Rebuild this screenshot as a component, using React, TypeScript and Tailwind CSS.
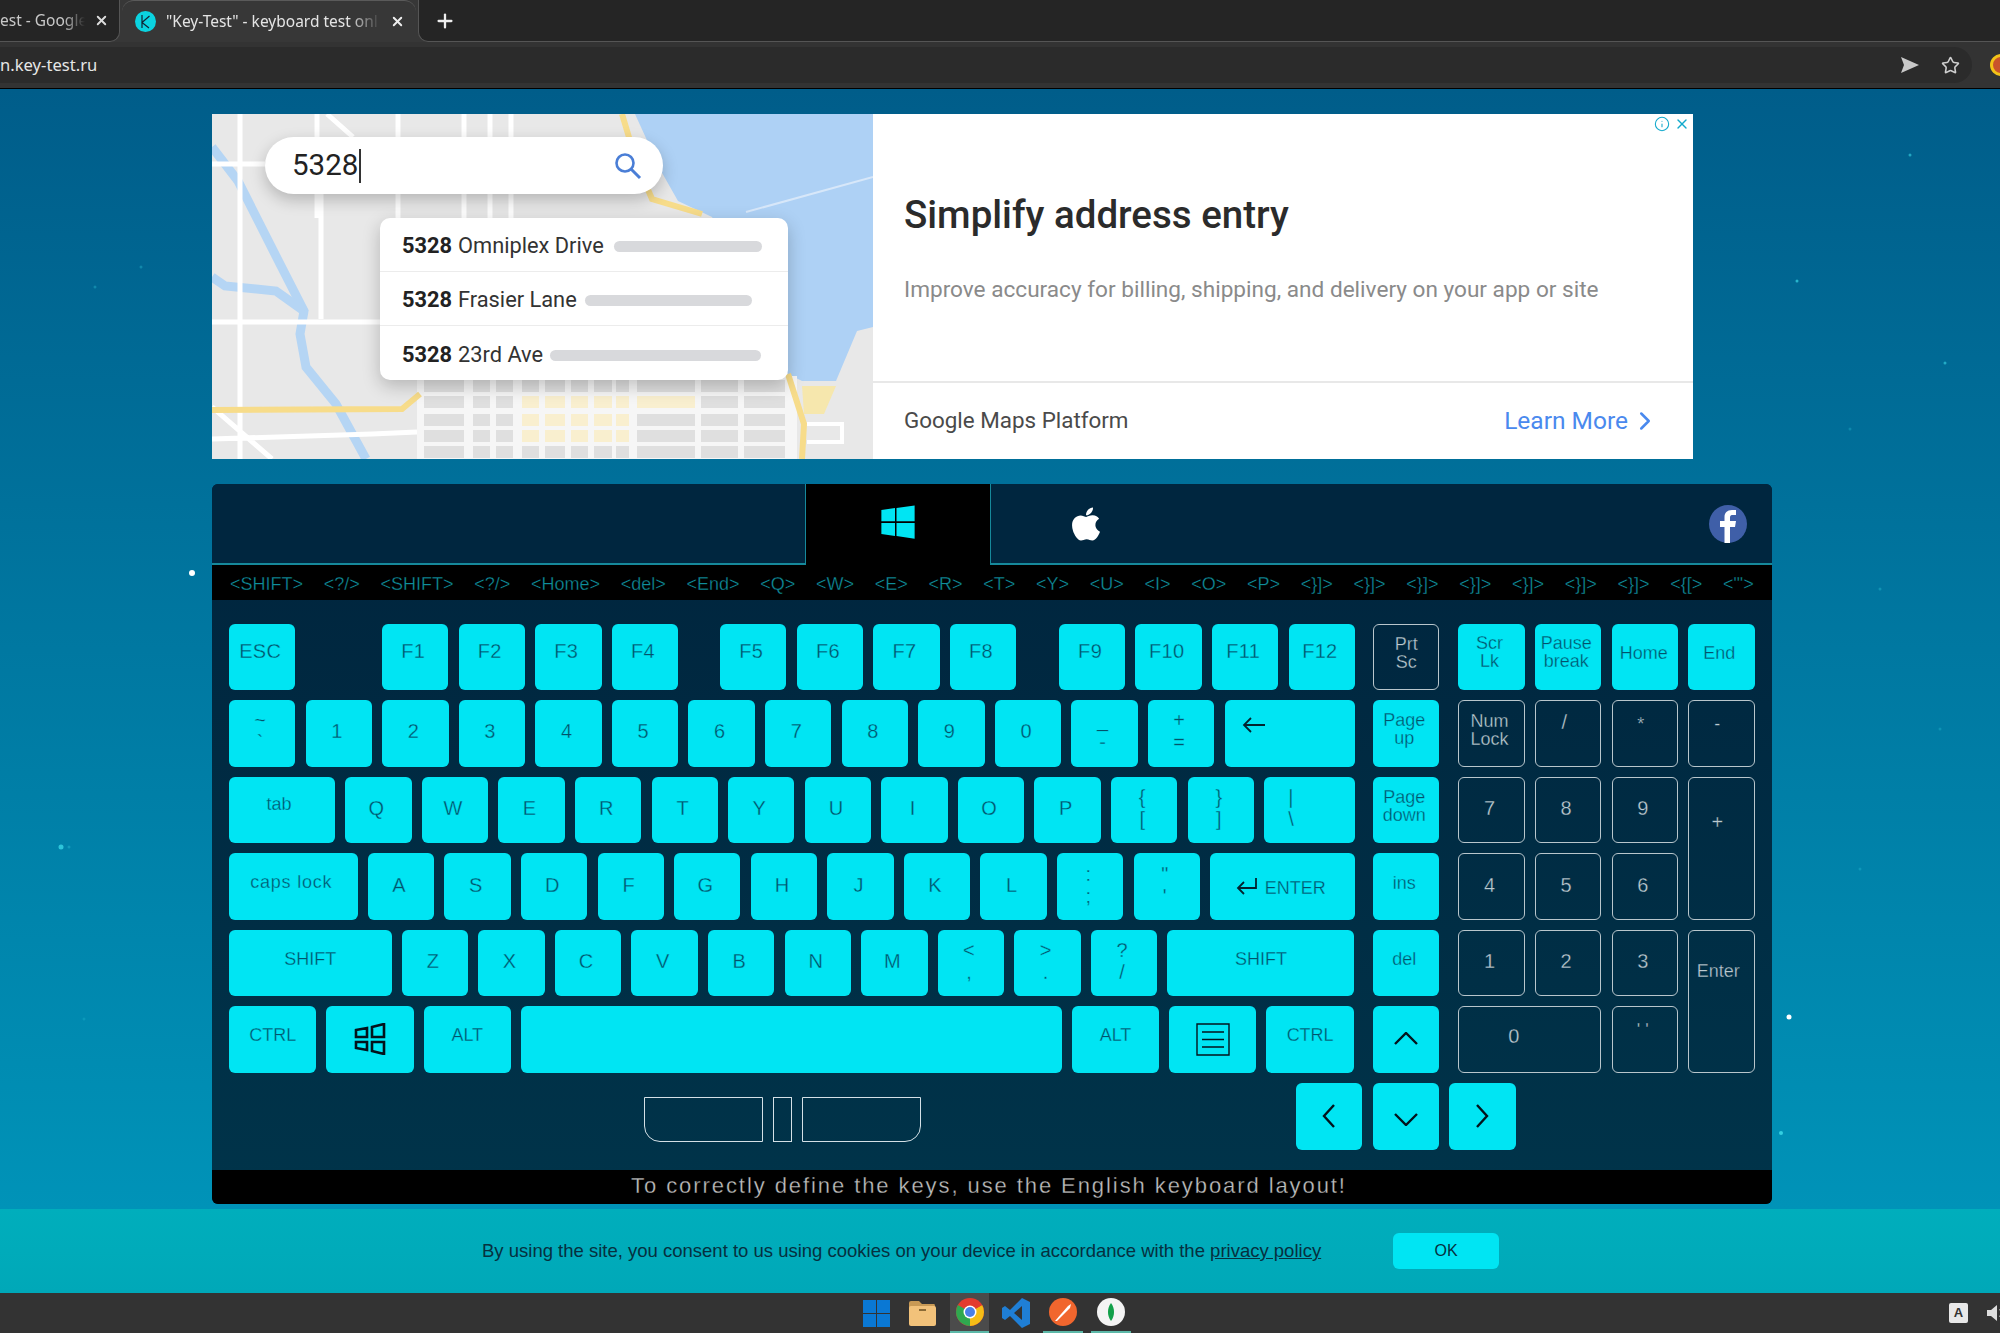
import type { ReactNode } from "react";
import clsx from "clsx";
import { FaApple, FaWindows } from "react-icons/fa";
import { ChevronRight, Info, Plus, Star, X } from "lucide-react";

// keyboard pieces
const Key = ({
  w = "w-[66.4px]",
  h = "h-[66.6px]",
  className,
  children,
}: {
  w?: string;
  h?: string;
  className?: string;
  children?: ReactNode;
}) => (
  <div
    className={clsx(
      "flex shrink-0 items-center justify-center rounded-md bg-[#00e5f3] text-[#02526b] [-webkit-text-stroke:0.3px_#00e5f3]",
      w,
      h,
      className,
    )}
  >
    {children}
  </div>
);

const PadKey = ({
  w = "w-[66.4px]",
  h = "h-[66.6px]",
  className,
  children,
}: {
  w?: string;
  h?: string;
  className?: string;
  children?: ReactNode;
}) => (
  <div
    className={clsx(
      "flex shrink-0 rounded-md border-[1.5px] border-[#b9c6cc] text-[#bccad1] [-webkit-text-stroke:0.3px_#002b42]",
      w,
      h,
      className,
    )}
  >
    {children}
  </div>
);

const Two = ({ a, b, className }: { a: string; b: string; className?: string }) => (
  <div className={clsx("flex flex-col items-center text-[20px] leading-[22px]", className)}>
    <span>{a}</span>
    <span>{b}</span>
  </div>
);

const Char = ({ c }: { c: string }) => (
  <Key className="pr-1 pb-1 text-[20px]">{c}</Key>
);

const Fn = ({ c, className }: { c: string; className?: string }) => (
  <Key className={clsx("pr-1 pb-3 text-[20px] tracking-[0.3px]", className)}>{c}</Key>
);

const Chevron = ({ d, w, h }: { d: string; w: number; h: number }) => (
  <svg width={w} height={h} viewBox={`0 0 ${w} ${h}`} fill="none" stroke="#03131c" strokeWidth="2.4">
    <path d={d} />
  </svg>
);

const legend = [
  "<SHIFT>", "<?/>", "<SHIFT>", "<?/>", "<Home>", "<del>", "<End>", "<Q>", "<W>", "<E>", "<R>", "<T>",
  "<Y>", "<U>", "<I>", "<O>", "<P>", "<}]>", "<}]>", "<}]>", "<}]>", "<}]>", "<}]>", "<}]>", "<{[>", "<\"'>",
];

const specks = [
  [192, 484, 3, "#ffffff", 1],
  [61, 758, 2.5, "#38d6e6", 0.8],
  [1789, 928, 2.5, "#ffffff", 1],
  [1781, 1044, 2, "#38d6e6", 0.9],
  [1910, 66, 1.5, "#38d6e6", 0.6],
  [1797, 192, 1.5, "#38d6e6", 0.7],
  [1945, 274, 1.5, "#38d6e6", 0.6],
  [95, 198, 1.5, "#38d6e6", 0.3],
  [141, 178, 1.5, "#38d6e6", 0.3],
  [69, 758, 1.5, "#38d6e6", 0.3],
  [84, 930, 1.5, "#38d6e6", 0.2],
  [1880, 500, 1.5, "#38d6e6", 0.3],
  [1860, 780, 1.5, "#38d6e6", 0.25],
  [1940, 640, 1.5, "#38d6e6", 0.25],
  [1850, 340, 1.5, "#38d6e6", 0.25],
] as const;

// the ad's map picture
const blockCols = [
  [212, 40],
  [261, 17],
  [284, 17],
  [310, 17],
  [333, 20],
  [359, 17],
  [382, 18],
  [404, 13],
  [425, 58],
  [489, 37],
  [532, 41],
];
const blockRows = [266, 282, 300, 316, 332];

const AdMap = () => (
  <svg width="661" height="345" viewBox="0 0 661 345" className="block">
    <rect width="661" height="345" fill="#e8e8e8" />
    <path d="M423 0 L449 57 L466 87 L500 103 L576 260 L590 267 L624 267 L645 217 L661 213 L661 0 Z" fill="#aed1f5" />
    <path d="M534 98 L661 63" stroke="#d7e7f9" strokeWidth="2" />
    <path d="M0 33 L26 67 L68 150 L92 197 L88 220 L94 253 L124 290 L154 345" stroke="#b5d5f4" strokeWidth="9" fill="none" />
    <path d="M0 163 L13 172 L64 177 L92 197" stroke="#b5d5f4" strokeWidth="9" fill="none" />
    {[105, 186, 252, 278, 299].map((x) => (
      <path key={x} d={`M${x} 0 V104`} stroke="#fff" strokeWidth="5" />
    ))}
    <path d="M28 0 V345 M109 80 V205 M0 208 H168 M0 50 H53 M115 0 L141 23 M0 293 L60 345 M0 325 L160 320 L205 318" stroke="#fff" strokeWidth="5" fill="none" />
    <rect x="205" y="262" width="380" height="83" fill="#f6f6f6" />
    {blockCols.map(([x, w], i) =>
      blockRows.map((y, j) => (
        <rect
          key={`${i}-${j}`}
          x={x}
          y={y}
          width={w}
          height={12}
          fill={i >= 3 && i <= 7 && j >= 1 && j <= 3 ? "#f9efcf" : i === 8 && j === 1 ? "#f9efcf" : "#dfdfdf"}
        />
      )),
    )}
    <path d="M0 296 L190 295 L208 280" stroke="#f7dc8a" strokeWidth="6" fill="none" />
    <path d="M410 0 L425 50 L440 85 L490 100" stroke="#f7dc8a" strokeWidth="6" fill="none" />
    <path d="M576 260 L592 310 L590 345" stroke="#f7dc8a" strokeWidth="6" fill="none" />
    <path d="M590 272 L624 272 L612 300 L592 300 Z" fill="#f6e7ad" />
    <path d="M595 310 H630 V328 H595" stroke="#fff" strokeWidth="4" fill="none" />
  </svg>
);

const Row = ({ children }: { children: ReactNode }) => <div className="flex gap-[10.2px]">{children}</div>;

export default function App() {
  return (
    <div className="flex h-[1333px] w-[2000px] flex-col overflow-hidden bg-[#333] font-['Liberation_Sans',Arial,sans-serif]">
      {/* browser chrome */}
      <div className="h-[42px] shrink-0 bg-[#373737] font-['Noto_Sans',sans-serif] text-[15.5px]">
        <div className="flex h-full items-stretch">
          <div className="flex w-[120px] items-center rounded-br-[10px] border-r border-b border-[#555] bg-[#252525]">
            <span className="w-[85px] whitespace-nowrap text-[#c9c9c9] [mask-image:linear-gradient(to_right,black_75%,transparent)]">
              est - Google
            </span>
            <X size={15} strokeWidth={3} className="ml-[9px] text-[#ddd]" />
          </div>
          <div className="ml-[2px] flex w-[294px] items-center rounded-t-xl border-t border-[#5a5a5a] pl-[13px] text-[#e4e4e4]">
            <svg width="21" height="21" viewBox="0 0 21 21" className="shrink-0">
              <circle cx="10.5" cy="10.5" r="10.5" fill="#0bd3e0" />
              <path d="M7 4 V17 M14.5 5 L7 11.5 L14 17" stroke="#123" strokeWidth="1.2" fill="none" />
            </svg>
            <span className="ml-[10px] w-[215px] whitespace-nowrap [mask-image:linear-gradient(to_right,black_85%,transparent)]">
              "Key-Test" - keyboard test onl
            </span>
            <X size={15} strokeWidth={3} className="ml-[9px] text-[#eee]" />
          </div>
          <div className="ml-[2px] flex flex-1 items-center rounded-bl-[10px] border-b border-l border-[#555] bg-[#252525] pl-[15px]">
            <Plus size={22} strokeWidth={2.5} className="text-[#eee]" />
          </div>
        </div>
      </div>
      <div className="flex h-[47px] shrink-0 items-center border-b border-black bg-[#333]">
        <div className="flex h-[36px] w-[1972px] shrink-0 items-center rounded-r-full bg-[#2b2b2b]">
          <span className="font-['Noto_Sans',sans-serif] text-[16.6px] text-[#e6e6e6]">n.key-test.ru</span>
          <svg width="20" height="16" viewBox="0 0 20 16" className="ml-auto" fill="#c9c9c9">
            <path d="M1 0 L19 8 L1 16 L4 8 Z" />
          </svg>
          <Star size={19} strokeWidth={2} className="mr-[12px] ml-[21px] text-[#cfcfcf]" />
        </div>
        <div className="ml-[18px] h-[22px] w-[22px] shrink-0 rounded-full border-[3px] border-[#f3c318] bg-[#c9532b]" />
      </div>

      {/* page */}
      <div className="relative flex-1 bg-[linear-gradient(180deg,#005d8a,#0093b8)] pt-[25px] pl-[212px]">
        <svg className="pointer-events-none absolute inset-0" width="2000" height="1120">
          {specks.map(([x, y, r, c, o], i) => (
            <circle key={i} cx={x} cy={y} r={r} fill={c} opacity={o} />
          ))}
        </svg>

        {/* ad */}
        <div className="relative flex h-[345px] w-[1481px] bg-white font-['Roboto',sans-serif]">
          <div className="relative h-[345px] w-[661px] shrink-0 overflow-hidden">
            <AdMap />
            <div className="absolute top-[23px] left-[53px] flex h-[57px] w-[398px] items-center rounded-full bg-white pr-[20px] pl-[27px] text-[29.5px] text-[#222] shadow-[0_6px_16px_rgba(0,0,0,0.22)]">
              <span>5328</span>
              <span className="ml-[1px] h-[34px] w-[1.5px] bg-[#333]" />
              <svg width="30" height="30" viewBox="0 0 30 30" fill="none" className="ml-auto">
                <circle cx="12" cy="12" r="8.5" stroke="#4a7ed6" strokeWidth="2.6" />
                <path d="M18 18 L27 27" stroke="#4a7ed6" strokeWidth="3" />
              </svg>
            </div>
            <div className="absolute top-[104px] left-[168px] flex w-[408px] flex-col divide-y divide-[#ececec] rounded-[10px] bg-white text-[21.8px] text-[#333] shadow-[0_6px_18px_rgba(0,0,0,0.22)]">
              <div className="flex h-[54px] items-center pt-[4px] pl-[22px]">
                <b className="mr-[6px] font-bold text-[#222]">5328</b>
                <span>Omniplex Drive</span>
                <span className="ml-[10px] h-[11px] w-[148px] rounded-full bg-[#d8d9dc]" />
              </div>
              <div className="flex h-[54px] items-center pt-[4px] pl-[22px]">
                <b className="mr-[6px] font-bold text-[#222]">5328</b>
                <span>Frasier Lane</span>
                <span className="ml-[8px] h-[11px] w-[167px] rounded-full bg-[#d8d9dc]" />
              </div>
              <div className="flex h-[54px] items-center pt-[4px] pl-[22px]">
                <b className="mr-[6px] font-bold text-[#222]">5328</b>
                <span>23rd Ave</span>
                <span className="ml-[7px] h-[11px] w-[211px] rounded-full bg-[#d8d9dc]" />
              </div>
            </div>
          </div>
          <div className="flex flex-1 flex-col">
            <div className="flex h-[267px] flex-col pl-[31px]">
              <h2 className="mt-[77px] text-[38.5px] leading-[48px] font-medium text-[#2b2b2b]">Simplify address entry</h2>
              <p className="mt-[36px] text-[22.6px] leading-[30px] text-[#8a8a8a]">
                Improve accuracy for billing, shipping, and delivery on your app or site
              </p>
            </div>
            <div className="flex flex-1 items-center border-t-2 border-[#e8e8e8] pr-[33px] pl-[31px]">
              <span className="text-[22.4px] text-[#4a4a4a]">Google Maps Platform</span>
              <span className="ml-auto text-[24.5px] text-[#4a89ee]">Learn More</span>
              <ChevronRight size={30} strokeWidth={2} className="ml-[2px] text-[#4a89ee]" />
            </div>
          </div>
          <div className="absolute top-[2px] right-[3px] flex items-center gap-[4px] text-[#12a9cc]">
            <Info size={16} strokeWidth={1.6} />
            <X size={16} strokeWidth={2} />
          </div>
        </div>

        {/* keyboard */}
        <div className="relative mt-[25px] w-[1560px] overflow-hidden rounded-md bg-[linear-gradient(180deg,#00243d,#00344a)]">
          <div className="flex h-[81px] bg-[#00263f]">
            <div className="w-[593px] border-b-2 border-[#16899b]" />
            <div className="flex w-[186px] items-center justify-center border-x border-[#16899b] bg-black pb-[6px]">
              <FaWindows size={38} className="text-[#00e5f3]" />
            </div>
            <div className="flex flex-1 items-center border-b-2 border-[#16899b] pr-[25px] pl-[76px]">
              <FaApple size={38} className="text-white" />
              <svg width="38" height="38" viewBox="0 0 38 38" className="ml-auto">
                <circle cx="19" cy="19" r="19" fill="#3f5fa8" />
                <path d="M21 38 V22 H26 L27 16 H21 V12.5 C21 10.5 22 10 24 10 H27 V5 H23 C18 5 15.5 8 15.5 12 V16 H11 V22 H15.5 V38 Z" fill="#fff" />
              </svg>
            </div>
          </div>
          <div className="flex h-[35px] items-center justify-between bg-black px-[18px] pt-[4px] text-[18px] text-[#0f8e9c] [-webkit-text-stroke:0.3px_#000]">
            {legend.map((l, i) => (
              <span key={i}>{l}</span>
            ))}
          </div>

          <div className="flex flex-col gap-[10px] pt-[23.5px] pr-[18px] pb-[20.5px] pl-[17px]">
            <div className="flex gap-[19px]">
              <div className="flex w-[1125px] flex-col gap-[10px]">
                <Row>
                  <Fn c="ESC" />
                  <Fn c="F1" className="ml-[76.4px]" />
                  <Fn c="F2" />
                  <Fn c="F3" />
                  <Fn c="F4" />
                  <Fn c="F5" className="ml-[31.8px]" />
                  <Fn c="F6" />
                  <Fn c="F7" />
                  <Fn c="F8" />
                  <Fn c="F9" className="ml-[32.5px]" />
                  <Fn c="F10" />
                  <Fn c="F11" />
                  <Fn c="F12" />
                </Row>
                <Row>
                  <Key className="pr-1 pb-1">
                    <Two a="~" b="`" />
                  </Key>
                  {"1234567890".split("").map((c) => (
                    <Char key={c} c={c} />
                  ))}
                  <Key className="pr-1 pb-1">
                    <Two a="_" b="-" />
                  </Key>
                  <Key className="pr-1 pb-1">
                    <Two a="+" b="=" />
                  </Key>
                  <Key w="w-[130px]" className="justify-start pb-[16px] pl-[17px]">
                    <svg width="23" height="16" viewBox="0 0 23 16" fill="none" stroke="#03232f" strokeWidth="1.8">
                      <path d="M23 8 H2 M9 1 L2 8 L9 15" />
                    </svg>
                  </Key>
                </Row>
                <Row>
                  <Key w="w-[106px]" className="pr-[6px] pb-[10px] text-[18px]">tab</Key>
                  {"QWERTYUIOP".split("").map((c) => (
                    <Char key={c} c={c} />
                  ))}
                  <Key className="pr-1 pb-1">
                    <Two a="{" b="[" />
                  </Key>
                  <Key className="pr-1 pb-1">
                    <Two a="}" b="]" />
                  </Key>
                  <Key w="w-[91px]" className="justify-start pb-1 pl-[24px]">
                    <Two a="|" b="\" />
                  </Key>
                </Row>
                <Row>
                  <Key w="w-[128.6px]" className="pr-1 pb-[8px] text-[18px] tracking-[0.8px]">caps lock</Key>
                  {"ASDFGHJKL".split("").map((c) => (
                    <Char key={c} c={c} />
                  ))}
                  <Key className="pr-1 pb-1">
                    <Two a=":" b=";" />
                  </Key>
                  <Key className="pr-1 pb-1">
                    <Two a={'"'} b="'" />
                  </Key>
                  <Key w="w-[145px]" className="gap-[7px] pr-[4px] text-[18px]">
                    <svg width="22" height="17" viewBox="0 0 22 17" fill="none" stroke="#03232f" strokeWidth="1.8">
                      <path d="M20 0 V10 H2 M8 4 L2 10 L8 16" />
                    </svg>
                    <span className="mt-[4px]">ENTER</span>
                  </Key>
                </Row>
                <Row>
                  <Key w="w-[162.5px]" className="pb-[8px] text-[18px]">SHIFT</Key>
                  {"ZXCVBNM".split("").map((c) => (
                    <Char key={c} c={c} />
                  ))}
                  <Key className="pr-1 pb-1">
                    <Two a="<" b="," />
                  </Key>
                  <Key className="pr-1 pb-1">
                    <Two a=">" b="." />
                  </Key>
                  <Key className="pr-1 pb-1">
                    <Two a="?" b="/" />
                  </Key>
                  <Key w="w-[187px]" className="pb-[8px] text-[18px]">SHIFT</Key>
                </Row>
                <div className="flex gap-[10px]">
                  <Key w="w-[87.3px]" className="pb-[8px] text-[18px]">CTRL</Key>
                  <Key w="w-[87.3px]" className="pb-[2px]">
                    <svg width="32" height="32" viewBox="0 0 32 32" fill="none" stroke="#03131c" strokeWidth="2.6">
                      <path d="M2 7 L13 5 V14 H2 Z M18 4 L30 1 V14 H18 Z M2 19 H13 V27 L2 25 Z M18 19 H30 V31 L18 28 Z" />
                    </svg>
                  </Key>
                  <Key w="w-[87.3px]" className="pb-[8px] text-[18px]">ALT</Key>
                  <Key w="w-[541px]" />
                  <Key w="w-[87.3px]" className="pb-[8px] text-[18px]">ALT</Key>
                  <Key w="w-[87.3px]">
                    <svg width="34" height="33" viewBox="0 0 34 33" fill="none" stroke="#03131c" strokeWidth="1.4">
                      <path d="M1 1 H33 V32 H1 Z M6 9 H28 M6 16.5 H28 M6 24 H28" />
                    </svg>
                  </Key>
                  <Key w="w-[87.3px]" className="pb-[8px] text-[18px]">CTRL</Key>
                </div>
              </div>

              {/* nav column */}
              <div className="flex flex-col gap-[10px] text-[18px] leading-[18px]">
                <PadKey className="items-center justify-center pb-[8px] text-center">
                  Prt
                  <br />
                  Sc
                </PadKey>
                <Key className="pr-1 pb-[8px] text-center">
                  Page
                  <br />
                  up
                </Key>
                <Key className="pr-1 pb-[8px] text-center">
                  Page
                  <br />
                  down
                </Key>
                <Key className="pr-1 pb-[8px]">ins</Key>
                <Key className="pr-1 pb-[8px]">del</Key>
                <Key className="pb-[2px]">
                  <Chevron d="M1 12 L12 1 L23 12" w={24} h={13} />
                </Key>
              </div>

              {/* numpad */}
              <div className="grid grid-cols-[repeat(4,66.4px)] gap-x-[10.2px] gap-y-[10px] text-[18px] leading-[18px]">
                <Key className="pr-1 pb-[10px] text-center">
                  Scr
                  <br />
                  Lk
                </Key>
                <Key className="pr-1 pb-[10px] text-center">
                  Pause
                  <br />
                  break
                </Key>
                <Key className="pr-[2px] pb-[8px]">Home</Key>
                <Key className="pr-[4px] pb-[8px]">End</Key>
                <PadKey className="items-center justify-center pr-1 pb-[6px] text-center">
                  Num
                  <br />
                  Lock
                </PadKey>
                <PadKey className="justify-center pt-[12px] pr-[8px] text-[20px]">/</PadKey>
                <PadKey className="justify-center pt-[14px] pr-[8px]">*</PadKey>
                <PadKey className="justify-center pt-[14px] pr-[8px]">-</PadKey>
                <PadKey className="items-center justify-center pr-1 pb-1 text-[20px]">7</PadKey>
                <PadKey className="items-center justify-center pr-1 pb-1 text-[20px]">8</PadKey>
                <PadKey className="items-center justify-center pr-1 pb-1 text-[20px]">9</PadKey>
                <PadKey h="h-[143.2px]" className="row-span-2 items-center justify-center pr-[8px] pb-[52px] text-[20px]">+</PadKey>
                <PadKey className="items-center justify-center pr-1 pb-1 text-[20px]">4</PadKey>
                <PadKey className="items-center justify-center pr-1 pb-1 text-[20px]">5</PadKey>
                <PadKey className="items-center justify-center pr-1 pb-1 text-[20px]">6</PadKey>
                <PadKey className="items-center justify-center pr-1 pb-1 text-[20px]">1</PadKey>
                <PadKey className="items-center justify-center pr-1 pb-1 text-[20px]">2</PadKey>
                <PadKey className="items-center justify-center pr-1 pb-1 text-[20px]">3</PadKey>
                <PadKey h="h-[143.2px]" className="row-span-2 items-center justify-center pr-[6px] pb-[60px]">Enter</PadKey>
                <PadKey w="w-[143px]" className="col-span-2 items-center justify-center pr-[32px] pb-[8px] text-[20px]">0</PadKey>
                <PadKey className="justify-center pt-[14px] pr-1">' '</PadKey>
              </div>
            </div>

            {/* space bar rail and arrows */}
            <div className="flex">
              <div className="mt-[14px] ml-[415px] flex h-[45px] gap-[10px]">
                <div className="w-[119px] rounded-bl-[16px] border-[1.5px] border-[#d4e0e6]" />
                <div className="w-[19px] border-[1.5px] border-[#d4e0e6]" />
                <div className="w-[119px] rounded-br-[16px] border-[1.5px] border-[#d4e0e6]" />
              </div>
              <div className="ml-[375px] flex gap-[10.2px]">
                <Key>
                  <Chevron d="M12 1 L2 12 L12 23" w={14} h={24} />
                </Key>
                <Key className="pt-[6px]">
                  <Chevron d="M1 1 L12 12 L23 1" w={24} h={13} />
                </Key>
                <Key>
                  <Chevron d="M2 1 L12 12 L2 23" w={14} h={24} />
                </Key>
              </div>
            </div>
          </div>

          <div className="flex h-[34px] items-center justify-center bg-black pr-[6px] pb-[4px] text-[22px] tracking-[1.92px] text-[#bdbdbd] [-webkit-text-stroke:0.3px_#000]">
            To correctly define the keys, use the English keyboard layout!
          </div>
        </div>
      </div>

      {/* cookie bar */}
      <div className="flex h-[84px] shrink-0 items-center bg-[linear-gradient(180deg,#00aebc,#00a8b8)] pl-[482px] text-[18.5px] text-[#06303f]">
        <span>
          By using the site, you consent to us using cookies on your device in accordance with the{" "}
          <u>privacy policy</u>
        </span>
        <button className="ml-[72px] h-[36px] w-[106px] rounded-md bg-[#00e5f3] text-[16px] text-[#06303f]">OK</button>
      </div>

      {/* taskbar */}
      <div className="flex h-[40px] shrink-0 items-center bg-[#333] pl-[863px]">
        <svg width="27" height="27" viewBox="0 0 27 27" fill="#0a78d4">
          <path d="M0 0 H13 V13 H0 Z M14 0 H27 V13 H14 Z M0 14 H13 V27 H0 Z M14 14 H27 V27 H14 Z" />
        </svg>
        <svg width="28" height="28" viewBox="0 0 28 28" className="ml-[18px]">
          <path d="M1 4 Q1 2 3 2 H11 L14 5 H26 Q27 5 27 7 V12 H1 Z" fill="#c99a55" />
          <rect x="1" y="7" width="27" height="20" rx="2" fill="#f2c27a" />
          <rect x="11" y="10" width="7" height="2" fill="#8a6a36" />
        </svg>
        <div className="ml-[14px] flex h-full w-[39px] items-center justify-center border-b-[2px] border-[#5cb8a8] bg-[#4b4b4b]">
          <svg width="28" height="28" viewBox="0 0 28 28">
            <circle cx="14" cy="14" r="14" fill="#e33b2e" />
            <path d="M14 14 L1.9 7 A14 14 0 0 0 14 28 Z" fill="#2fa84f" />
            <path d="M14 14 L14 28 A14 14 0 0 0 26.1 7 Z" fill="#f5bd16" />
            <path d="M14 14 L26.1 7 H14 Z" fill="#e33b2e" />
            <circle cx="14" cy="14" r="6.5" fill="#fff" />
            <circle cx="14" cy="14" r="5" fill="#4a80e8" />
          </svg>
        </div>
        <svg width="28" height="30" viewBox="0 0 28 30" className="ml-[13px]">
          <path d="M20 0 L28 4 V26 L20 30 L8 18 L3 22 L0 20 V10 L3 8 L8 12 Z M20 8 L12 15 L20 22 Z" fill="#1f7fd6" />
        </svg>
        <div className="ml-[13px] flex h-full w-[40px] items-center justify-center border-b-[2px] border-[#5cb8a8]">
          <svg width="28" height="28" viewBox="0 0 28 28">
            <circle cx="14" cy="14" r="14" fill="#f1662e" />
            <path d="M6 23 L19 8 L22 6 L21 10 L8 23 Z" fill="#fff" />
          </svg>
        </div>
        <div className="ml-[8px] flex h-full w-[40px] items-center justify-center border-b-[2px] border-[#5cb8a8]">
          <svg width="28" height="28" viewBox="0 0 28 28">
            <circle cx="14" cy="14" r="14" fill="#f4f4f4" />
            <path d="M14 5 C18 10 18 18 14 23 C10 18 10 10 14 5 Z" fill="#13a04a" />
          </svg>
        </div>
        <div className="ml-auto flex h-[20px] w-[19px] items-center justify-center rounded-[2px] bg-[#e8e8e8] text-[13px] font-bold text-[#333]">A</div>
        <svg width="20" height="20" viewBox="0 0 20 20" fill="#ddd" className="mr-[-6px] ml-[18px]">
          <path d="M1 7 H5 L11 2 V18 L5 13 H1 Z" />
          <path d="M14 6 Q17 10 14 14" stroke="#ddd" strokeWidth="2" fill="none" />
        </svg>
      </div>
    </div>
  );
}
